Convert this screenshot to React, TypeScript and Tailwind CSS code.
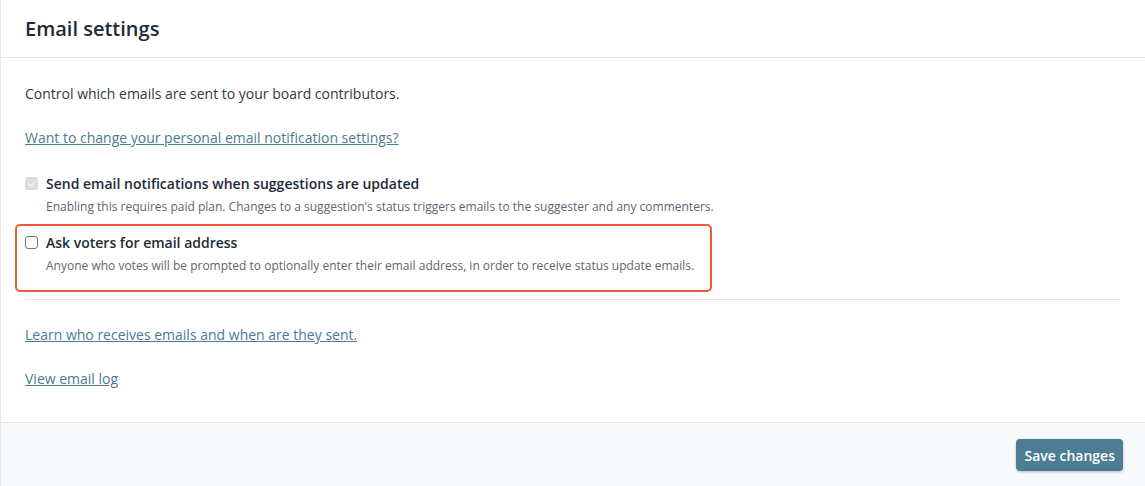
import { Check } from "lucide-react";

function CheckRow({
  checked,
  disabled,
  label,
  hint,
}: {
  checked?: boolean;
  disabled?: boolean;
  label: string;
  hint: string;
}) {
  return (
    <div className="flex gap-[8px]">
      <div className="pt-[3px]">
        {checked ? (
          <div className="w-[13px] h-[13px] rounded-[2px] bg-[#dcdcdc] flex items-center justify-center">
            <Check size={10} strokeWidth={3} color={disabled ? "#f4f4f4" : "#fff"} />
          </div>
        ) : (
          <div className="w-[13px] h-[13px] rounded-[3px] border border-[#767676] bg-white" />
        )}
      </div>
      <div className="flex flex-col">
        <span className="text-[14px] leading-[20px] font-semibold text-[#1d2b36]">{label}</span>
        <span className="text-[12px] leading-[18px] mt-[4px] text-[#5b6770]">{hint}</span>
      </div>
    </div>
  );
}

export default function App() {
  return (
    <div
      className="w-full h-[486px] flex flex-col bg-white border-l border-[#e3e8ef]"
      style={{ fontFamily: '"Open Sans", sans-serif' }}
    >
      <div className="h-[58px] flex items-center px-[24px] border-b border-[#e3e6ee] shrink-0">
        <h1 className="text-[20px] font-semibold text-[#1d2b36]">Email settings</h1>
      </div>

      <div className="flex-1 px-[24px] pt-[26px]">
        <p className="text-[14px] leading-[20px] text-[#2c3a45]">
          Control which emails are sent to your board contributors.
        </p>
        <a className="block mt-[24px] text-[14px] leading-[20px] text-[#4a7b90] underline">
          Want to change your personal email notification settings?
        </a>

        <div className="mt-[26px]">
          <CheckRow
            checked
            disabled
            label="Send email notifications when suggestions are updated"
            hint="Enabling this requires paid plan. Changes to a suggestion's status triggers emails to the suggester and any commenters."
          />
        </div>

        <div className="mt-[8px] ml-[-10px] w-[697px] border-2 border-[#f05a3c] rounded-[5px] pl-[8px] pt-[7px] pb-[15px]">
          <CheckRow
            label="Ask voters for email address"
            hint="Anyone who votes will be prompted to optionally enter their email address, in order to receive status update emails."
          />
        </div>

        <div className="mt-[7px] border-t border-[#e3e6ee]" />

        <a className="block mt-[25px] text-[14px] leading-[20px] text-[#4a7b90] underline">
          Learn who receives emails and when are they sent.
        </a>
        <a className="block mt-[24px] text-[14px] leading-[20px] text-[#4a7b90] underline">
          View email log
        </a>
      </div>

      <div className="h-[64px] shrink-0 border-t border-[#e3e6ee] bg-[#f7f9fb] flex items-start justify-end pr-[22px] pt-[16px]">
        <button className="h-[32px] px-[8px] rounded-[4px] bg-[#4d7d92] text-white text-[14px] font-semibold shadow-[0_1px_3px_rgba(0,0,0,0.25)]">
          Save changes
        </button>
      </div>
    </div>
  );
}
